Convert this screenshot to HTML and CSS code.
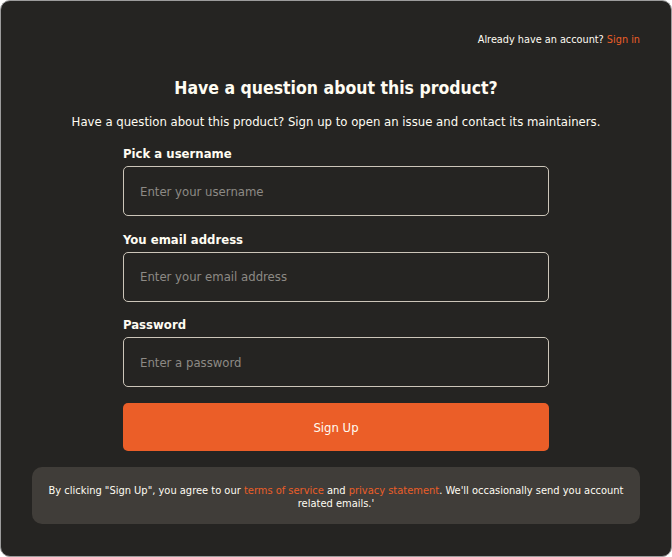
FILE: index.html
```html
<!DOCTYPE html>
<html lang="en">
<head>
<meta charset="utf-8">
<title>Sign up</title>
<link rel="stylesheet" href="styles.css">
</head>
<body>
<div class="frame">
  <div class="topbar">Already have an account? <a class="link" href="#">Sign in</a></div>
  <h1 class="title">Have a question about this product?</h1>
  <p class="subtitle">Have a question about this product? Sign up to open an issue and contact its maintainers.</p>
  <form class="form">
    <div class="group">
      <label class="label">Pick a username</label>
      <input class="input" type="text" placeholder="Enter your username">
    </div>
    <div class="group">
      <label class="label">You email address</label>
      <input class="input" type="email" placeholder="Enter your email address">
    </div>
    <div class="group">
      <label class="label">Password</label>
      <input class="input" type="password" placeholder="Enter a password">
    </div>
    <button class="button" type="button">Sign Up</button>
  </form>
  <div class="note">By clicking "Sign Up", you agree to our <a class="link" href="#">terms of service</a> and <a class="link" href="#">privacy statement</a>. We'll occasionally send you account related emails.'</div>
</div>
</body>
</html>
```
FILE: styles.css
```css
* { box-sizing: border-box; }
html, body { margin: 0; padding: 0; background: #ffffff; }
body { font-family: "DejaVu Sans Condensed", "Liberation Sans", sans-serif; color: #fffcf2; }
.frame {
  height: 557px;
  border: 1px solid #9c9c9c;
  border-radius: 10px;
  background: #252422;
  padding: 0 31px;
  overflow: hidden;
}
.topbar {
  padding-top: 32px;
  text-align: right;
  font-size: 10.8px;
  line-height: 14px;
}
.link { color: #eb5e28; text-decoration: none; }
.title {
  margin: 29px 0 0;
  text-align: center;
  font-size: 17.5px;
  line-height: 24px;
  font-weight: bold;
}
.subtitle {
  margin: 14px 0 0;
  text-align: center;
  font-size: 13px;
  line-height: 16px;
}
.form {
  width: 426px;
  margin: 16px auto 0;
  display: flex;
  flex-direction: column;
}
.group {
  display: flex;
  flex-direction: column;
  gap: 4px;
  margin-bottom: 15.5px;
}
.label {
  font-size: 13px;
  line-height: 16px;
  font-weight: bold;
}
.input {
  height: 50px;
  border: 1px solid #ccc5b9;
  border-radius: 5px;
  background: #252422;
  color: #fffcf2;
  padding: 0 16px;
  font-family: inherit;
  font-size: 13px;
  outline: none;
}
.input::placeholder { color: #8d8a85; }
.button {
  margin-top: 0.5px;
  height: 48px;
  border: none;
  border-radius: 5px;
  background: #eb5e28;
  color: #fffcf2;
  font-family: inherit;
  font-size: 13px;
}
.note {
  margin-top: 16px;
  background: #403d39;
  border-radius: 10px;
  padding: 17px 14px 14px;
  text-align: center;
  font-size: 11px;
  line-height: 13px;
}
```
